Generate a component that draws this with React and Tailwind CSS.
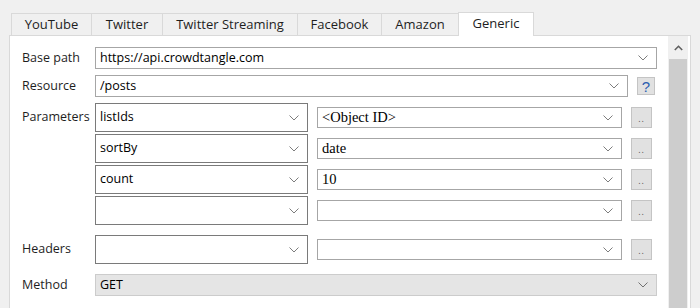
import React from 'react';

const tabs = [
    { name: 'YouTube', w: 'w-[81px]' },
    { name: 'Twitter', w: 'w-[72px]' },
    { name: 'Twitter Streaming', w: 'w-[136px]' },
    { name: 'Facebook', w: 'w-[85px]' },
    { name: 'Amazon', w: 'w-[78px]' },
];

const Chevron = ({ color = '#7d7d7d' }) => (
    <svg width="10" height="6" viewBox="0 0 10 6" className="shrink-0">
        <path d="M0.5 0.5 L5 5 L9.5 0.5" fill="none" stroke={color} strokeWidth="1" />
    </svg>
);

const Combo = ({ value, className = '', serif, dark }) => (
    <div
        className={`flex items-center justify-between bg-white border pl-[4px] pr-[8px] ${dark ? 'border-[#7a7a7a]' : 'border-[#a6a6a6]'} ${className}`}
    >
        <span
            className={`text-black leading-none ${serif ? "font-['Liberation_Serif',serif] text-[14.5px]" : "font-['Open_Sans',sans-serif] text-[12.5px]"}`}
        >
            {value}
        </span>
        <Chevron />
    </div>
);

const DotsButton = () => (
    <div className="w-[21px] h-[21px] ml-[9px] bg-[#e1e1e1] border border-[#c4c4c4] flex items-end justify-center pb-[4px]">
        <span className="text-[9px] leading-none text-[#555] tracking-[1px]">..</span>
    </div>
);

const ParamRow = ({ name, value }) => (
    <div className="flex items-center h-[29px]">
        <Combo value={name} dark className="w-[213px] h-[29px]" />
        <div className="w-[9px]" />
        <Combo value={value} serif className="w-[305px] h-[21px]" />
        <DotsButton />
    </div>
);

const Label = ({ children, className = '' }) => (
    <div className={`w-[73px] shrink-0 text-[12.5px] text-[#1e1e1e] font-['Open_Sans',sans-serif] ${className}`}>
        {children}
    </div>
);

export default function App() {
    return (
        <div className="w-[700px] h-[308px] bg-[#f0f0f0] overflow-hidden font-['Open_Sans',sans-serif]">
            <div className="flex items-end pl-[11px] pt-[12px] h-[35px]">
                {tabs.map((t) => (
                    <div
                        key={t.name}
                        className={`${t.w} h-[22px] -ml-px first:ml-0 border border-b-0 border-[#d9d9d9] bg-[#f0f0f0] flex items-center justify-center pt-[1px] text-[13px] text-[#1e1e1e]`}
                    >
                        {t.name}
                    </div>
                ))}
                <div className="w-[76px] h-[24px] -ml-px mb-[-1px] relative z-10 border border-b-0 border-[#d9d9d9] bg-white flex items-start pt-[1px] justify-center text-[13px] text-[#1e1e1e]">
                    Generic
                </div>
            </div>
            <div className="ml-[9px] w-[682px] h-[280px] bg-white border border-[#d9d9d9] flex">
                <div className="flex-1 pl-[12px] pt-[11px]">
                    <div className="flex items-center h-[22px]">
                        <Label>Base path</Label>
                        <Combo value="https://api.crowdtangle.com" className="w-[562px] h-[22px]" />
                    </div>
                    <div className="flex items-center h-[22px] mt-[6px]">
                        <Label>Resource</Label>
                        <Combo value="/posts" className="w-[533px] h-[22px]" />
                        <div className="w-[18px] h-[18px] ml-[9px] bg-[#e1e1e1] border border-[#c4c4c4] flex items-center justify-center text-[15px] leading-none text-[#2a5db0] font-['Liberation_Sans',sans-serif]">
                            ?
                        </div>
                    </div>
                    <div className="flex mt-[6px]">
                        <Label className="pt-[5px]">Parameters</Label>
                        <div className="flex flex-col gap-[2px]">
                            <ParamRow name="listIds" value="<Object ID>" />
                            <ParamRow name="sortBy" value="date" />
                            <ParamRow name="count" value="10" />
                            <ParamRow name="" value="" />
                        </div>
                    </div>
                    <div className="flex items-center mt-[10px]">
                        <Label>Headers</Label>
                        <ParamRow name="" value="" />
                    </div>
                    <div className="flex items-center h-[22px] mt-[10px]">
                        <Label>Method</Label>
                        <div className="w-[562px] h-[22px] bg-[#e5e5e5] border border-[#cccccc] flex items-center justify-between pl-[4px] pr-[8px]">
                            <span className="text-[12.5px] leading-none text-black">GET</span>
                            <Chevron color="#707070" />
                        </div>
                    </div>
                </div>
                <div className="w-[20px] mr-[2px] flex flex-col bg-[#f0f0f0]">
                    <div className="h-[23px] flex items-center justify-center">
                        <svg width="9" height="6" viewBox="0 0 9 6">
                            <path d="M0.8 5 L4.5 1.3 L8.2 5" fill="none" stroke="#606060" strokeWidth="1.6" />
                        </svg>
                    </div>
                    <div className="flex-1 mx-[1px] bg-[#cdcdcd]" />
                </div>
            </div>
        </div>
    );
}
